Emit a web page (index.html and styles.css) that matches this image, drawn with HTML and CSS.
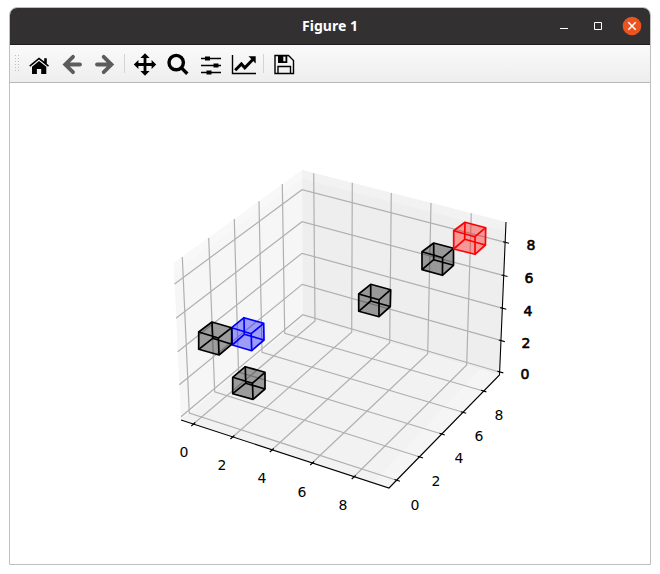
FILE: index.html
```html
<!DOCTYPE html>
<html lang="en">
<head>
<meta charset="utf-8">
<title>Figure 1</title>
<link rel="stylesheet" href="styles.css">
</head>
<body>
<div class="window">
  <header class="titlebar">
    <h1 class="title">Figure 1</h1>
    <div class="controls">
      <button class="control" type="button" aria-label="Minimize"><svg viewBox="0 0 20 20"><path d="M6 12.5h8"/></svg></button>
      <button class="control" type="button" aria-label="Maximize"><svg viewBox="0 0 20 20"><path d="M6.5 6.5h7v7h-7z"/></svg></button>
      <button class="control close" type="button" aria-label="Close"><svg viewBox="0 0 20 20"><circle cx="10" cy="10" r="9.3"/><path d="M6.3 6.3l7.4 7.4M13.7 6.3l-7.4 7.4"/></svg></button>
    </div>
  </header>

  <nav class="toolbar" aria-label="Figure tools">
    <svg class="handle" viewBox="0 0 12 17"><path d="M5.5 0v17M8.5 0v17"/></svg>
    <button class="tool" type="button" aria-label="Home"><svg viewBox="0 0 25 25"><path d="M3.2 14.4L13 6.4l5.2 4.2V7.2h2.6v5.6l2.2 1.8-1 1.2-9-7.3-8.8 7.2z"/><path d="M6 15.7l7-5.8 7.3 5.8V23h-5.1v-5h-4.3v5H6z"/></svg></button>
    <button class="tool muted" type="button" aria-label="Back"><svg viewBox="0 0 25 25"><path class="arrow" d="M14 5.8L6.2 13.5l7.8 7.7M7 13.5h14"/></svg></button>
    <button class="tool muted" type="button" aria-label="Forward"><svg viewBox="0 0 25 25"><path class="arrow" d="M11.7 5.8l7.8 7.7-7.8 7.7M19 13.5H5"/></svg></button>
    <span class="separator"></span>
    <button class="tool" type="button" aria-label="Pan"><svg viewBox="0 0 25 25"><path d="M13 2.2l4.6 4.7h-3.2v5.2h5.2V8.9l4.6 4.6-4.6 4.6v-3.2h-5.2v5.2h3.2L13 24.8l-4.6-4.7h3.2v-5.2H6.4v3.2l-4.6-4.6 4.6-4.6v3.2h5.2V6.9H8.4z"/></svg></button>
    <button class="tool" type="button" aria-label="Zoom"><svg viewBox="0 0 25 25"><circle class="lens" cx="11.2" cy="11.6" r="7.2"/><path class="lens" d="M16.7 17.1l5.6 5.6"/></svg></button>
    <button class="tool" type="button" aria-label="Subplots"><svg viewBox="0 0 25 25"><path class="line" d="M3 7.5h20M3 14.5h20M3 21.5h20"/><path d="M7 5.5h5v4H7zM15.5 12.5h5v4h-5zM8.5 19.5h5v4h-5z"/></svg></button>
    <button class="tool" type="button" aria-label="Edit axes"><svg viewBox="0 0 25 25"><path class="line" d="M1.5 4v18.5H25"/><path class="trend" d="M4.2 19.3l6.2-6.3 3.4 3.7 7.8-8"/><path d="M17.5 5.2h7.2v7.2z"/></svg></button>
    <span class="separator"></span>
    <button class="tool" type="button" aria-label="Save"><svg viewBox="0 0 25 25"><path class="line" d="M4 4.5h13.5l5 5v13H4zM7 22v-6.5h12.5V22"/><path d="M7 4h9.3v8H7zM12.3 5.5v4.8h2.2V5.5z" fill-rule="evenodd"/></svg></button>
  </nav>

  <main class="canvas">
    <svg class="plot" viewBox="10 83 640 481" role="img" aria-label="3D voxel plot">
      <g>
        <path class="wall-left" d="M173.7 263L302 170l.7 147.5L181 420z"/>
        <path class="wall-back" d="M302 170l204 52-6.5 153-196.8-57.5z"/>
        <path class="floor" d="M181 420l121.7-102.5L499.5 375 389 488z"/>
      </g>
      <g class="rim">
        <path d="M173.7 263L302 170l204 52-1 9-203-52-127 93z"/>
        <path d="M499.5 375L389 488l-16-5 107-114z"/>
      </g>
      <g class="grid">
        <path d="M313.7 173.3L315 321 193 424.3M352.3 182.7l-.6 149.6-119.4 105M391.3 193l-1.6 149.7-118 107.3M431 203l-3.3 150.7L312 463M471.3 213.3L466.7 365l-113 112"/>
        <path d="M182.3 257l7 156 207.4 67.3M208.7 238l6 153.7L420 457M234.3 219l4.2 153 203.2 62M259 201.3l3 151 201 60M282.3 184l2.4 149.3L483.3 391"/>
        <path d="M174.5 284L302 189.7l203.5 52.6M176 318.3l126-96.6 202 54M177.7 351.7L302 253.3l201 55M179.3 384.7l123-100.4 199.2 56.4M181 416.7l121.7-102L499.7 372"/>
      </g>
      <g class="axes">
        <path d="M181 420l208 68L499.5 375 506 222"/>
        <path d="M191.3 426l4-3.5M230.4 439l4-3.5M269.8 452l4-3.5M310.2 465l4-3.5M351.7 479l4-3.5"/>
        <path d="M394.5 479.4l5.5 1.8M417.7 456.2l5.3 1.7M439.5 433.3l5.3 1.7M460.8 411.7l5.4 1.6M481 390.3l5.4 1.6"/>
        <path d="M503 241.8l6 1.5M501.5 275l6 1.5M500.3 307.6l6 1.6M498.8 340l6 1.6M497.3 371.3l6 1.6"/>
      </g>
      <g class="cube dark">
        <path class="body" d="M370.7 284.3l20 5.4-.4 16.8-11.3 10.2-20.3-5.4V294z"/>
        <path d="M358.7 294l20.3 5.8 11.7-10.1M379 299.8v16.9M370.7 284.3V301l19.6 5.5M370.7 301l-12 10.3"/>
      </g>
      <g class="cube dark">
        <path class="body" d="M433.7 243l19.8 5.3v17l-11.1 10-20.4-5.7v-17.9z"/>
        <path d="M422 251.7l20.6 6 10.9-9.4M442.6 257.7l-.2 17.6M433.7 243v16.7l19.8 5.6M433.7 259.7L422 269.6"/>
      </g>
      <g class="cube red">
        <path class="body" d="M465 222.3l20.7 5.4-.3 17.3-10.4 9.3-21.3-5.3v-18.3z"/>
        <path d="M453.7 230.7l21.3 6 10.7-9M475 236.7v17.6M465 222.3l-.3 17 20.7 5.7M464.7 239.3l-11 9.7"/>
      </g>
      <g class="cube blue">
        <path class="body" d="M244 317.7l19.7 5.6.3 16.7-12.3 10.7-19.4-5.7-.6-17.3z"/>
        <path d="M231.7 327.7l19.5 6 12.5-10.4M251.2 333.7l.5 17M244 317.7l.3 16.6L264 340M244.3 334.3l-12 10.7"/>
      </g>
      <g class="cube dark">
        <path class="body" d="M212 322l19.7 5.7v16.6L219 355l-20.3-5.7V332z"/>
        <path d="M198.7 332l19.7 6 13.3-10.3M218.4 338l.6 17M212 322l.7 16.3 19 6M212.7 338.3l-14 11"/>
      </g>
      <g class="cube dark">
        <path class="body" d="M245.3 366.7l19.7 5.6V389l-12 10.4-20.3-5.7v-16.4z"/>
        <path d="M232.7 377.3l19.8 5.9L265 372.3M252.5 383.2l.5 16.2M245.3 366.7l.4 16.5L265 389M245.7 383.2l-13 10.5"/>
      </g>
      <g class="labels">
        <text x="184" y="457">0</text><text x="222" y="470">2</text><text x="262" y="483">4</text><text x="302" y="497">6</text><text x="343" y="510">8</text>
        <text x="415" y="510">0</text><text x="436" y="486">2</text><text x="459" y="463">4</text><text x="479" y="441">6</text><text x="499" y="420">8</text>
      </g>
      <g class="labels heavy">
        <text x="525" y="379">0</text><text x="526" y="348">2</text><text x="528" y="316">4</text><text x="529" y="283">6</text><text x="531" y="250">8</text>
      </g>
    </svg>
  </main>
</div>
</body>
</html>
```
FILE: styles.css
```css
* {
  box-sizing: border-box;
}

body {
  display: flex;
  min-height: 100vh;
  margin: 0;
  padding: 7px 9px 9px;
  background: #fff;
  font-family: "Noto Sans", "Open Sans", sans-serif;
}

button {
  display: grid;
  place-items: center;
  padding: 0;
  border: 0;
  background: none;
}

.window {
  display: flex;
  flex: 1;
  flex-direction: column;
  overflow: hidden;
  border: 1px solid #bfbfbf;
  border-radius: 8px 8px 0 0;
  background: #fff;
}

.titlebar {
  display: grid;
  grid-template-columns: 1fr auto 1fr;
  align-items: center;
  height: 37px;
  padding: 0 8px;
  border-bottom: 1px solid #1f1d1d;
  background: #333031;
  color: #fff;
}

.title {
  grid-column: 2;
  margin: 0;
  font-size: 14px;
  line-height: 20px;
  font-weight: 700;
}

.controls {
  display: flex;
  justify-content: flex-end;
  gap: 14px;
}

.control,
.control svg {
  width: 20px;
  height: 20px;
}

.control path {
  fill: none;
  stroke: #fff;
}

.close circle {
  fill: #e95420;
}

.close .cross,
.close path {
  stroke-width: 1.5;
}

.toolbar {
  display: flex;
  align-items: center;
  height: 38px;
  border-bottom: 1px solid #b8b8b8;
  background: linear-gradient(#fafafa, #eee);
}

.handle {
  width: 12px;
  height: 17px;
}

.handle path {
  stroke: #bdbdbd;
  stroke-dasharray: 1 2;
}

.tool {
  width: 33px;
  height: 37px;
  color: #000;
}

.tool svg {
  width: 25px;
  height: 25px;
  fill: currentColor;
}

.muted {
  color: #5c5c5c;
}

.arrow,
.lens,
.line,
.trend {
  fill: none;
  stroke: currentColor;
}

.arrow {
  stroke-width: 3.8;
  stroke-linecap: round;
}

.lens {
  stroke-width: 3.4;
}

.line {
  stroke-width: 1.4;
}

.trend {
  stroke-width: 3;
}

.separator {
  width: 1px;
  height: 19px;
  margin: 0 3px;
  background: #d4d4d4;
}

.canvas {
  display: flex;
  flex: 1;
  min-height: 0;
}

.plot {
  width: 100%;
  height: 100%;
}

.wall-left {
  fill: #f6f6f6;
}

.wall-back {
  fill: #eee;
}

.floor {
  fill: #f2f2f2;
}

.rim {
  fill: #fff;
  opacity: .25;
}

.grid {
  fill: none;
  stroke: #b0b0b0;
  stroke-width: 1.2;
}

.axes {
  fill: none;
  stroke: #000;
  stroke-width: 1.1;
}

.cube {
  fill: none;
  stroke: currentColor;
  stroke-width: 1.7;
  stroke-linejoin: round;
}

.body {
  fill: currentColor;
  fill-opacity: .36;
}

.dark {
  color: #000;
}

.red {
  color: #f00;
}

.blue {
  color: #00f;
}

.labels {
  font-family: "DejaVu Sans", sans-serif;
  font-size: 14px;
  text-anchor: middle;
}

.heavy {
  stroke: #000;
  stroke-width: .6;
}
```
